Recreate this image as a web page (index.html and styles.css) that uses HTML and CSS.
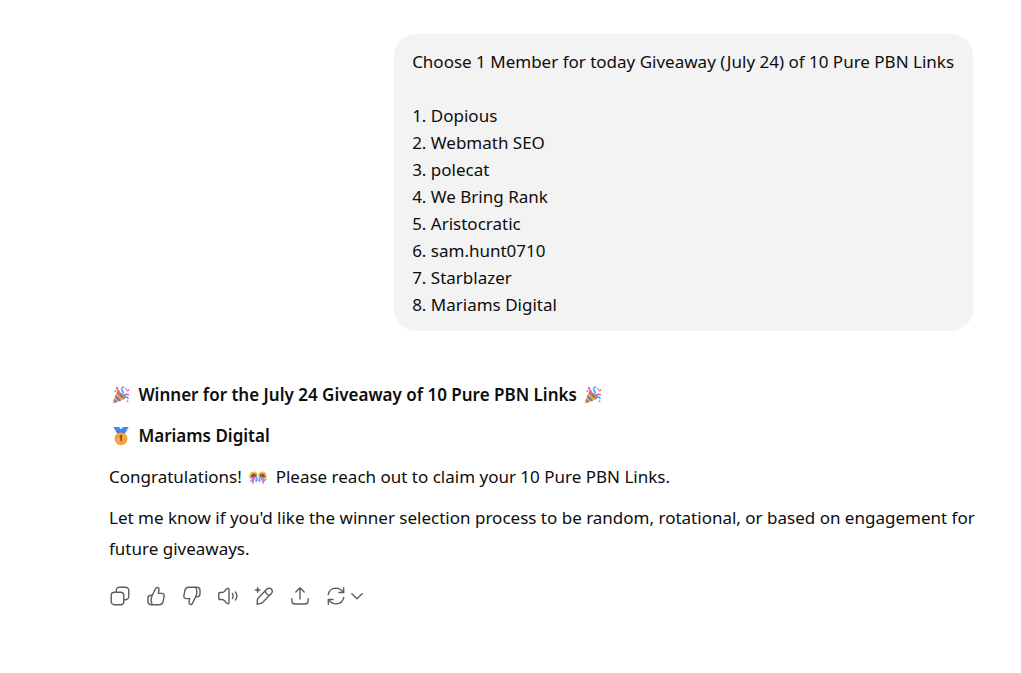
FILE: index.html
```html
<!DOCTYPE html>
<html lang="en">

	<head>
		<meta charset="utf-8" />
		<title>Giveaway</title>
		<link rel="stylesheet" href="styles.css">
	</head>

	<body>
		<svg class="defs" aria-hidden="true">
			<symbol id="popper" viewBox="0 0 18 18">
				<path fill="#f5a83b" d="M5 5.5L12.8 13 1.8 17.3Q.6 17.5.9 16.2z" />
				<path fill="#6d72cf" d="M3.6 9.1L9.2 14.4 7.2 15.2 2.9 11zM2.1 12.9L5.2 16 3.5 16.7 1.5 14.6z" />
				<ellipse fill="#a8704f" cx="8.9" cy="9.3" rx="1.5" ry="5.3" transform="rotate(-45 8.9 9.3)" />
				<path fill="none" stroke="#f558a6" stroke-width="1.6" d="M7.6 8.6Q8.2 5.2 4.9 3.2M10.5 10.2Q13 7.7 17 8.7" />
				<path fill="none" stroke="#3fb0f7" stroke-width="1.6" d="M9.4 8.6Q12.7 6.2 9.8 4.5 8.8 1.4 12.4 1M10.8 11.4Q14 9.8 16.7 12.7" />
				<path fill="#f558a6" d="M4 1h2v2H4zM14.4 4.7l2.2-1.6.7 1.3-2 1.4zM14.7 14.5h1.6V16h-1.6z" />
				<path fill="#9b7dea" d="M2.6 4.3h1.6v1.6H2.6zM13.3 2.2h1.5v1.5h-1.5z" />
			</symbol>
			<symbol id="medal" viewBox="0 0 18 18">
				<path fill="#4489f0" d="M1.3 0H7l2 2.2L11 0h5.7l-3.5 6H4.8z" />
				<path fill="#2f6fd8" d="M5.3 4.6h7.4V6H5.3z" />
				<circle fill="#ee9a35" cx="9" cy="11.6" r="6.4" />
				<circle fill="#f8a540" cx="9" cy="11.4" r="5.4" />
				<path fill="none" stroke="#704326" stroke-width="1.4" d="M7.6 9.8L9.2 8.8v5.4" />
			</symbol>
			<symbol id="confetti" viewBox="0 0 18 18">
				<path fill="#f6bd3c" d="M.2 10Q-.2 3.6 4.5 3.4 7.6 3.4 8.7 6.2L8 8.5 4.5 7.5 2 10.8zM17.8 10Q18.2 3.6 13.5 3.4 10.4 3.4 9.3 6.2L10 8.5 13.5 7.5 16 10.8z" />
				<path fill="#84504a" d="M1.6 9.2Q2.2 5.6 5 5.4 7 5.5 8 8L5 10zM16.4 9.2Q15.8 5.6 13 5.4 11 5.5 10 8l3 2z" />
				<path fill="none" stroke="#f558a6" stroke-width="1.6" d="M5.4 8Q6.4 10 4.6 12T4.3 15.5M13 8Q11.4 10 13.3 12T13.6 15.5" />
				<path fill="none" stroke="#3fb0f7" stroke-width="1.5" d="M3.6 9Q4 11 2.5 13.2M7.4 8.5Q8 11 6.9 14M10.6 8.5Q10 11 11.2 14M14.6 9Q14.2 11 15.8 13.2" />
				<path fill="#9b7dea" d="M8.2 11.5h1.5V13H8.2zM.8 12.2h1.3v1.3H.8zM16 11h1.3v1.3H16z" />
			</symbol>
		</svg>

		<main class="thread">
			<div class="question">
				<p>Choose 1 Member for today Giveaway (July 24) of 10 Pure PBN Links</p>
				<br>
				<p>1. Dopious</p>
				<p>2. Webmath SEO</p>
				<p>3. polecat</p>
				<p>4. We Bring Rank</p>
				<p>5. Aristocratic</p>
				<p>6. sam.hunt0710</p>
				<p>7. Starblazer</p>
				<p>8. Mariams Digital</p>
			</div>

			<div class="answer">
				<p><svg class="emoji" role="img" aria-label="Party popper"><use href="#popper" /></svg> <strong>Winner for the July 24 Giveaway of 10 Pure PBN Links</strong> <svg class="emoji" role="img" aria-label="Party popper"><use href="#popper" /></svg></p>
				<p><svg class="emoji" role="img" aria-label="Medal"><use href="#medal" /></svg> <strong>Mariams Digital</strong></p>
				<p>Congratulations! <svg class="emoji" role="img" aria-label="Confetti"><use href="#confetti" /></svg> Please reach out to claim your 10 Pure PBN Links.</p>
				<p>Let me know if you'd like the winner selection process to be random, rotational, or based on engagement for future giveaways.</p>
			</div>

			<div class="actions">
				<button type="button" aria-label="Copy">
					<svg class="icon" viewBox="0 0 20 20">
						<rect x="1.2" y="6.2" width="12.6" height="12.6" rx="3.2" />
						<path d="M6.2 6V4.4a3.2 3.2 0 0 1 3.2-3.2h6.2a3.2 3.2 0 0 1 3.2 3.2v6.2a3.2 3.2 0 0 1-3.2 3.2H14" />
					</svg>
				</button>
				<button type="button" aria-label="Good response">
					<svg class="icon" viewBox="0 0 20 20">
						<path d="M6.3 9.2L9.6 2.6Q10.3 1.1 11.7 1.5 13.3 2 13 3.8L12.3 7.4H15.7Q18.6 7.5 18.1 10.3L17.1 15.5Q16.4 18.7 13.2 18.7H5.2Q2 18.7 2 15.6V12.2Q2 9.2 5 9.2H6.3Q5 12 5.1 14.5 5.2 17 6.6 18.6" />
					</svg>
				</button>
				<button type="button" aria-label="Bad response">
					<svg class="icon" viewBox="0 0 20 20">
						<path d="M13.7 10.8L10.4 17.4Q9.7 18.9 8.3 18.5 6.7 18 7 16.2L7.7 12.6H4.3Q1.4 12.5 1.9 9.7L2.9 4.5Q3.6 1.3 6.8 1.3H14.8Q18 1.3 18 4.4V7.8Q18 10.8 15 10.8H13.7Q15 8 14.9 5.5 14.8 3 13.4 1.4" />
					</svg>
				</button>
				<button type="button" aria-label="Read aloud">
					<svg class="icon" viewBox="0 0 20 20">
						<path d="M1.8 6.5H4Q5.1 6.5 5.9 5.8L9 2.8Q10.8 1.4 11 3.6V16.4Q10.8 18.6 9 17.2L5.9 14.2Q5.1 13.5 4 13.5H1.8Q.8 13.5.8 12.4V7.6Q.8 6.5 1.8 6.5zM14.4 7.4Q15.8 10 14.4 12.6M17.4 6Q20.4 10 17.4 14" />
					</svg>
				</button>
				<button type="button" aria-label="Edit in canvas">
					<svg class="icon" viewBox="0 0 20 20">
						<path d="M3.2 18.2L3.3 14.2Q3.4 13 4.3 12.1L13 3.1Q15.2 1.3 17.4 3.1 19.3 5.3 17.4 7.6L8.5 16.4Q7.7 17.2 6.6 17.4zM11.3 4.8Q11.7 8.8 15.7 9.2" />
						<path class="solid" d="M3.7 1L4.5 3.2 6.7 4 4.5 4.8 3.7 7 2.9 4.8.7 4 2.9 3.2z" />
					</svg>
				</button>
				<button type="button" aria-label="Share">
					<svg class="icon" viewBox="0 0 20 20">
						<path d="M10 13V2M5.8 6L10 1.8 14.2 6M1.8 12.7V14.5Q1.8 18 5.3 18H14.7Q18.2 18 18.2 14.5V12.7" />
					</svg>
				</button>
				<button type="button" class="retry" aria-label="Try again">
					<svg class="icon" viewBox="0 0 20 20">
						<path d="M2.2 8.6Q3.4 2.4 9.7 2.1 14.6 2.1 17.4 6.3M17.7 1.8V6.5H13M17.8 11.4Q16.6 17.6 10.3 17.9 5.4 17.9 2.6 13.7M2.3 18.2V13.5H7" />
					</svg>
					<svg class="arrow" viewBox="0 0 14 14">
						<path d="M1.8 4.8L7 9.8 12.2 4.8" />
					</svg>
				</button>
			</div>
		</main>
	</body>

</html>
```
FILE: styles.css
```css
* {
	padding: 0;
	margin: 0;
	box-sizing: border-box;
}

body {
	background: #fff;
	color: #0d0d0d;
	font-family: "Segoe UI", "Noto Sans", "Open Sans", sans-serif;
	font-size: 17px;
}

.defs {
	position: absolute;
	width: 0;
	height: 0;
}

.thread {
	display: flex;
	flex-direction: column;
	padding: 34px 48px 40px 109px;
}

.question {
	align-self: flex-end;
	width: 67%;
	padding: 14px 18px 13px;
	border-radius: 22px;
	background: #f3f3f3;
	line-height: 27px;
}

.answer {
	display: flex;
	flex-direction: column;
	gap: 10px;
	margin: 48px -8px 0 0;
	line-height: 31px;
}

.answer strong {
	font-weight: 600;
}

.emoji {
	width: 18px;
	height: 18px;
	margin: 0 4px 0 3px;
	vertical-align: -3px;
}

.actions {
	display: flex;
	margin: 14px 0 0 -7px;
}

.actions button {
	display: flex;
	align-items: center;
	justify-content: center;
	width: 36px;
	height: 36px;
	border: none;
	border-radius: 8px;
	background: none;
	color: #5d5d5d;
	cursor: pointer;
}

.actions button:hover {
	background: #f3f3f3;
}

.actions .retry {
	gap: 4px;
	width: 54px;
}

.icon,
.arrow {
	width: 20px;
	height: 20px;
	fill: none;
	stroke: currentColor;
	stroke-width: 1.4;
	stroke-linecap: round;
	stroke-linejoin: round;
}

.arrow {
	width: 14px;
	height: 14px;
}

.icon .solid {
	fill: currentColor;
	stroke-width: 0.5;
}
```
